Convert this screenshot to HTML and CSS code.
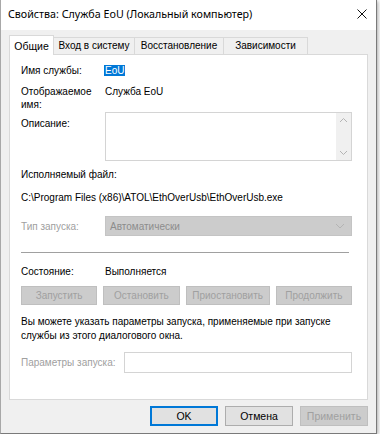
FILE: index.html
```html
<!DOCTYPE html>
<html lang="ru">
<head>
  <meta charset="UTF-8">
  <title>Свойства: Служба EoU</title>
  <link rel="stylesheet" href="styles.css">
</head>
<body>
  <div class="window">
    <div class="titlebar">
      <span class="title">Свойства: Служба EoU (Локальный компьютер)</span>
      <svg class="close" width="10" height="10" viewBox="0 0 10 10">
        <path d="M0.5 0.5 L9.5 9.5 M9.5 0.5 L0.5 9.5" stroke="#111" stroke-width="1" fill="none"/>
      </svg>
    </div>

    <div class="body">
      <div class="tabs">
        <div class="tab active">Общие</div>
        <div class="tab tab-login">Вход в систему</div>
        <div class="tab tab-restore">Восстановление</div>
        <div class="tab tab-deps">Зависимости</div>
      </div>

      <div class="panel">
        <div class="row row-name">
          <span class="label">Имя службы:</span>
          <span class="value"><span class="selected">EoU</span></span>
        </div>

        <div class="row row-display">
          <span class="label">Отображаемое<br>имя:</span>
          <span class="value">Служба EoU</span>
        </div>

        <div class="row row-desc">
          <span class="label label-desc">Описание:</span>
          <div class="textarea">
            <div class="scrollbar">
              <svg width="9" height="6" viewBox="0 0 9 6"><path d="M1 5 L4.5 1.5 L8 5" stroke="#b4b4b4" fill="none"/></svg>
              <svg width="9" height="6" viewBox="0 0 9 6"><path d="M1 1 L4.5 4.5 L8 1" stroke="#b4b4b4" fill="none"/></svg>
            </div>
          </div>
        </div>

        <div class="exe-label">Исполняемый файл:</div>
        <div class="exe-path">C:\Program Files (x86)\ATOL\EthOverUsb\EthOverUsb.exe</div>

        <div class="row row-start">
          <span class="label disabled">Тип запуска:</span>
          <div class="combo">
            <span>Автоматически</span>
            <svg width="10" height="6" viewBox="0 0 10 6"><path d="M1 1 L5 5 L9 1" stroke="#b4b4b4" fill="none"/></svg>
          </div>
        </div>

        <div class="divider"></div>

        <div class="row row-state">
          <span class="label">Состояние:</span>
          <span class="value">Выполняется</span>
        </div>

        <div class="state-buttons">
          <button class="btn" disabled>Запустить</button>
          <button class="btn" disabled>Остановить</button>
          <button class="btn" disabled>Приостановить</button>
          <button class="btn" disabled>Продолжить</button>
        </div>

        <p class="hint">Вы можете указать параметры запуска, применяемые при запуске<br>службы из этого диалогового окна.</p>

        <div class="row row-params">
          <span class="label disabled">Параметры запуска:</span>
          <div class="input"></div>
        </div>
      </div>

      <div class="actions">
        <button class="btn btn-ok">OK</button>
        <button class="btn btn-cancel">Отмена</button>
        <button class="btn btn-apply" disabled>Применить</button>
      </div>
    </div>
  </div>
</body>
</html>
```

FILE: styles.css
```css
* { box-sizing: border-box; }

body {
  margin: 0;
  background: #ffffff;
  font-family: 'Liberation Sans', Arial, sans-serif;
  font-size: 10px;
  color: #000000;
}

.window {
  width: 377px;
  height: 434px;
  background: #f0f0f0;
  border: 1px solid #a8a8a8;
  border-top: none;
  border-right-color: #7a7a7a;
  border-bottom-color: #7a7a7a;
  box-shadow: 1px 1px 4px rgba(0, 0, 0, 0.35);
  display: flex;
  flex-direction: column;
}

.titlebar {
  height: 30px;
  background: #ffffff;
  display: flex;
  align-items: center;
  justify-content: space-between;
  padding: 0 9px 2px 7px;
}

.title {
  font-family: 'Noto Sans', sans-serif;
  font-size: 10.7px;
  color: #000000;
}

.body {
  padding: 0 8px;
}

.tabs {
  display: flex;
  height: 24px;
  padding-top: 5px;
  align-items: flex-end;
}

.tab {
  height: 17px;
  border: 1px solid #d9d9d9;
  border-bottom: none;
  background: #f0f0f0;
  line-height: 16px;
  margin-left: -1px;
  text-align: center;
  white-space: nowrap;
}

.tab.active {
  height: 20px;
  width: 45px;
  margin-left: 0;
  margin-bottom: -1px;
  background: #ffffff;
  line-height: 20px;
  font-size: 10.5px;
  position: relative;
  z-index: 1;
}

.tab-login { width: 82px; }
.tab-restore { width: 90px; }
.tab-deps { width: 85px; }

.panel {
  height: 346px;
  background: #ffffff;
  border: 1px solid #d9d9d9;
  padding: 9px 15px 0 11px;
}

.row {
  display: grid;
  grid-template-columns: 84px 1fr;
  align-items: start;
  line-height: 13px;
  white-space: nowrap;
}

.row-name { height: 13px; }

.selected {
  background: #0078d7;
  color: #ffffff;
  padding: 0 1px;
  margin-left: -1px;
}

.row-display { margin-top: 8px; }

.row-desc { margin-top: 1px; }
.label-desc { padding-top: 5px; }

.textarea {
  height: 49px;
  border: 1px solid #d4d4d4;
  display: flex;
  justify-content: flex-end;
}

.scrollbar {
  width: 15px;
  background: #f0f0f0;
  display: flex;
  flex-direction: column;
  justify-content: space-between;
  align-items: center;
  padding: 4px 0;
}

.scrollbar svg { display: block; }

.exe-label {
  margin-top: 7px;
  line-height: 13px;
}

.exe-path {
  margin-top: 10px;
  line-height: 13px;
}

.row-start {
  margin-top: 12px;
  align-items: center;
}

.disabled { color: #a0a0a0; }

.combo {
  height: 20px;
  background: #cccccc;
  border: 1px solid #c4c4c4;
  color: #8c8c8c;
  display: flex;
  align-items: center;
  justify-content: space-between;
  padding: 0 6px 0 4px;
}

.divider {
  margin-top: 16px;
  width: 328px;
  height: 1px;
  background: #a0a0a0;
}

.row-state { margin-top: 12px; }

.state-buttons {
  margin-top: 8px;
  display: flex;
  gap: 6px;
}

.btn {
  font-family: inherit;
  font-size: 10px;
  height: 19px;
  padding: 0;
  background: #e1e1e1;
  border: 1px solid #adadad;
  color: #000000;
}

.btn:disabled {
  background: #cccccc;
  border-color: #bfbfbf;
  color: #a0a0a0;
}

.state-buttons .btn { width: 77px; }
.state-buttons .btn:nth-child(3) { width: 85px; }

.hint {
  margin: 10px 0 0;
  line-height: 14px;
  white-space: nowrap;
}

.row-params {
  margin-top: 9px;
  grid-template-columns: 103px 1fr;
  align-items: center;
}

.input {
  height: 21px;
  border: 1px solid #d4d4d4;
}

.actions {
  display: flex;
  justify-content: flex-end;
  gap: 7px;
  margin-top: 6px;
}

.actions .btn {
  width: 68px;
  height: 20px;
  font-size: 10.5px;
}

.btn-ok {
  border: 2px solid #0078d7;
}
```
